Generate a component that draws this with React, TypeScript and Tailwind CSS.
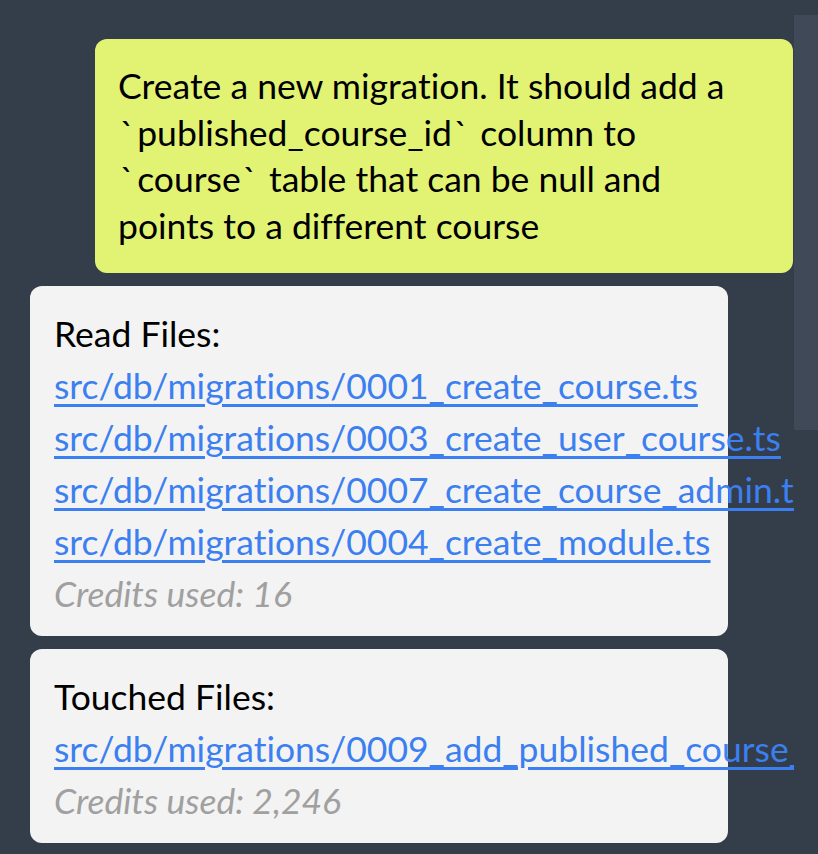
import React from 'react';

const readFiles = [
    'src/db/migrations/0001_create_course.ts',
    'src/db/migrations/0003_create_user_course.ts',
    'src/db/migrations/0007_create_course_admin.ts',
    'src/db/migrations/0004_create_module.ts',
];

const touchedFiles = ['src/db/migrations/0009_add_published_course_id_to_course.ts'];

// the original font draws the backtick quite wide
const Tick: React.FC = () => <span className="pr-[3px] pl-[2px]">`</span>;

const Code: React.FC<{ children: React.ReactNode }> = ({ children }) => (
    <span className="whitespace-nowrap">
        <Tick />
        {children}
        <Tick />
    </span>
);

const FileCard: React.FC<{ title: string; files: string[]; credits: string }> = ({ title, files, credits }) => (
    <div className="w-[698px] rounded-xl bg-[#f3f3f3] px-6 pt-[22px] pb-4 leading-[52px]">
        <div className="text-black">{title}</div>
        {files.map((f) => (
            <div key={f} className="whitespace-nowrap">
                <a href="#" className="text-[#3b7ff0] underline underline-offset-[5px]">
                    {f}
                </a>
            </div>
        ))}
        <div className="italic text-[#a0a0a0]">Credits used: {credits}</div>
    </div>
);

export default function App() {
    return (
        <div
            className="flex h-[854px] w-[818px] bg-[#343d4a] text-[35.5px] [font-variant-ligatures:none]"
            style={{ fontFamily: 'Lato, "Noto Sans", sans-serif' }}
        >
            <div className="flex w-[794px] flex-col gap-[13px] overflow-hidden pt-[39px] pl-[30px]">
                <div className="ml-[65px] w-[698px] rounded-xl bg-[#e2f374] py-[24px] pr-[32px] pl-[23px] leading-[46.5px] text-black">
                    Create a new migration. It should add a <Code>published_course_id</Code> column to{' '}
                    <Code>course</Code> table that can be null and points to a different course
                </div>
                <FileCard title="Read Files:" files={readFiles} credits="16" />
                <FileCard title="Touched Files:" files={touchedFiles} credits="2,246" />
            </div>
            <div className="w-6">
                <div className="mt-[15px] h-[415px] bg-[#3f4957]" />
            </div>
        </div>
    );
}
